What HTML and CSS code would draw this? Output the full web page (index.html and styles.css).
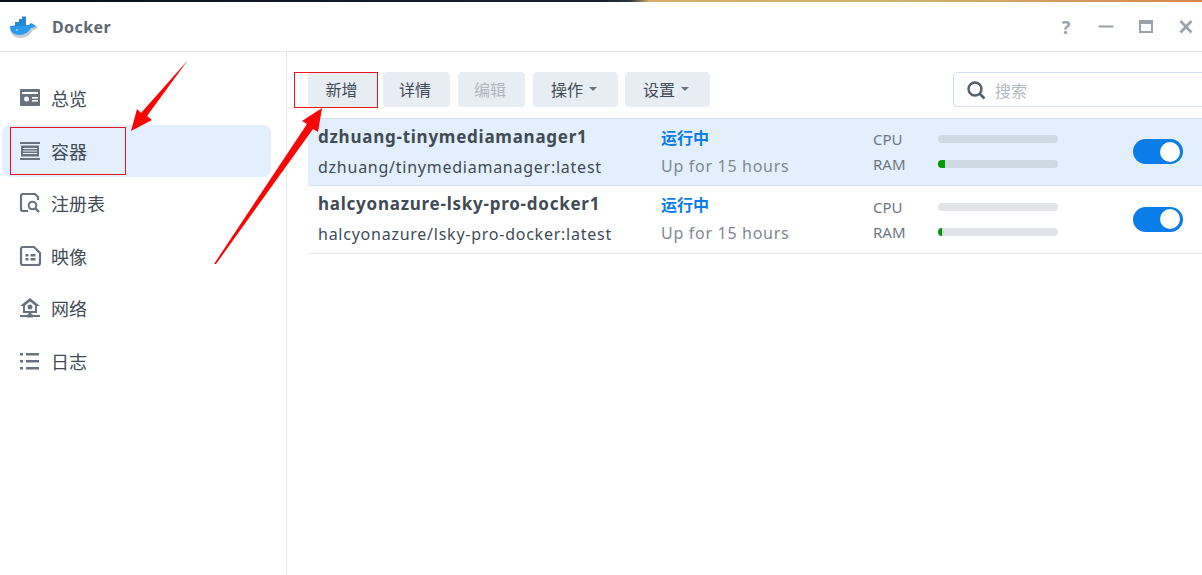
FILE: index.html
```html
<!DOCTYPE html>
<html lang="zh-CN">
<head>
  <meta charset="UTF-8">
  <title>Docker</title>
  <link rel="stylesheet" href="styles.css">
</head>
<body>
  <div class="top-strip"></div>

  <!-- Title bar -->
  <header class="titlebar">
    <svg class="logo" width="30" height="24" viewBox="0 0 30 24">
      <path d="M1 13c5-1 16-1 20-1 1-2 3-3 4-2l4 2c-1 2-3 3-5 3-3 5-7 8-12 8-7 0-11-4-11-10z" fill="#c3cbd0"/>
      <path d="M1 11c5-1 15-1 19-1 1-2 3-2 4-1l3 2c-1 1-3 2-5 2-2 4-7 7-11 7-6 0-10-3-10-9z" fill="#2a9bea"/>
      <path d="M6 7h11v4H6zM10 4h7v3h-7zM13 1.500h4V4h-4z" fill="#2489d4"/>
      <circle cx="8" cy="15" r="1" fill="#a8d6f5"/>
    </svg>
    <span class="app-name">Docker</span>
    <div class="win-buttons">
      <span class="help">?</span>
      <svg width="16" height="16" viewBox="0 0 16 16"><rect x="0.500" y="6.500" width="15" height="2" fill="#9aa1aa"/></svg>
      <svg width="16" height="16" viewBox="0 0 16 16"><path d="M1 1h14v13H1z M3 5v7h10V5z" fill="#9aa1aa" fill-rule="evenodd"/></svg>
      <svg width="16" height="16" viewBox="0 0 16 16"><path d="M2.500 2l11 11.500M13.500 2l-11 11.500" stroke="#9aa1aa" stroke-width="2.600" fill="none"/></svg>
    </div>
  </header>

  <div class="main">
    <!-- Sidebar -->
    <nav class="sidebar">
      <a class="nav-item">
        <svg width="24" height="24" viewBox="0 0 24 24"><path d="M3 3h18a1 1 0 0 1 1 1v15a1 1 0 0 1-1 1H3a1 1 0 0 1-1-1V4a1 1 0 0 1 1-1z" fill="#6a737d"/><rect x="4" y="6" width="16" height="2" fill="#fff"/><circle cx="8.500" cy="13" r="2.500" fill="#fff"/><rect x="14" y="11" width="6" height="1.600" fill="#fff"/><rect x="14" y="14" width="6" height="1.600" fill="#fff"/></svg>
        总览
      </a>
      <a class="nav-item active">
        <svg width="24" height="24" viewBox="0 0 24 24"><path d="M2 3h20v2H2zM2 19h20v2H2zM3 6.500h18v11H3zM5 9v1h14V9zM5 11.500v1h14v-1zM5 14v1h14v-1z" fill="#6a737d" fill-rule="evenodd"/></svg>
        容器
      </a>
      <a class="nav-item">
        <svg width="24" height="24" viewBox="0 0 24 24"><path d="M10 20H5a2 2 0 0 1-2-2V5a2 2 0 0 1 2-2h12l3 3v3" fill="none" stroke="#6a737d" stroke-width="2.200"/><circle cx="14.500" cy="14.500" r="3.800" fill="none" stroke="#6a737d" stroke-width="2"/><path d="M17.500 17.500l3.500 3.500" stroke="#6a737d" stroke-width="2.400"/></svg>
        注册表
      </a>
      <a class="nav-item">
        <svg width="24" height="24" viewBox="0 0 24 24"><path d="M5 3h11l6 6v10a2 2 0 0 1-2 2H5a2 2 0 0 1-2-2V5a2 2 0 0 1 2-2z" fill="none" stroke="#6a737d" stroke-width="2.200"/><path d="M7.500 10h3v2.500h-3zM12.500 10h5v2.500h-5zM7.500 14h3v2.500h-3zM12.500 14h5v2.500h-5z" fill="#6a737d"/></svg>
        映像
      </a>
      <a class="nav-item">
        <svg width="24" height="24" viewBox="0 0 24 24"><path d="M12 2L2 10h3v7h14v-7h3zM12 5.500l5 4V15H7V9.500z" fill="#6a737d" fill-rule="evenodd"/><circle cx="12" cy="11" r="2.500" fill="#6a737d"/><path d="M10.500 16h3v3h-3zM2 19h7v2H2zM15 19h7v2h-7zM9 18.500h6v3H9z" fill="#6a737d"/></svg>
        网络
      </a>
      <a class="nav-item">
        <svg width="24" height="24" viewBox="0 0 24 24"><path d="M2 4h3v2.400H2zM8 4h13v2.400H8zM2 11h3v2.400H2zM8 11h13v2.400H8zM2 18h3v2.400H2zM8 18h13v2.400H8z" fill="#6a737d"/></svg>
        日志
      </a>
    </nav>

    <!-- Container list -->
    <section class="content">
      <div class="toolbar">
        <button class="btn btn-new">新增</button>
        <button class="btn btn-detail">详情</button>
        <button class="btn btn-edit" disabled>编辑</button>
        <button class="btn btn-action">操作<i class="caret"></i></button>
        <button class="btn btn-settings">设置<i class="caret"></i></button>
        <div class="search">
          <svg width="20" height="20" viewBox="0 0 20 20"><circle cx="9" cy="9" r="6.500" fill="none" stroke="#56606c" stroke-width="2.400"/><path d="M13.500 13.500l5 5" stroke="#56606c" stroke-width="2.600"/></svg>
          <span>搜索</span>
        </div>
      </div>

      <div class="row selected">
        <div class="names">
          <div class="name">dzhuang-tinymediamanager1</div>
          <div class="image">dzhuang/tinymediamanager:latest</div>
        </div>
        <div class="status">
          <div class="state">运行中</div>
          <div class="uptime">Up for 15 hours</div>
        </div>
        <div class="usage">
          <div class="meter"><span>CPU</span><div class="bar"></div></div>
          <div class="meter"><span>RAM</span><div class="bar"><div class="fill" style="width:6%"></div></div></div>
        </div>
        <div class="toggle"></div>
      </div>

      <div class="row">
        <div class="names">
          <div class="name">halcyonazure-lsky-pro-docker1</div>
          <div class="image">halcyonazure/lsky-pro-docker:latest</div>
        </div>
        <div class="status">
          <div class="state">运行中</div>
          <div class="uptime">Up for 15 hours</div>
        </div>
        <div class="usage">
          <div class="meter"><span>CPU</span><div class="bar"></div></div>
          <div class="meter"><span>RAM</span><div class="bar"><div class="fill" style="width:3.500%"></div></div></div>
        </div>
        <div class="toggle"></div>
      </div>
    </section>
  </div>

  <!-- Red annotations drawn over the screenshot -->
  <svg class="marks" width="1202" height="575" viewBox="0 0 1202 575">
    <rect x="10.500" y="127.500" width="115" height="47" fill="none" stroke="#e8141c"/>
    <rect x="294.500" y="72.500" width="83" height="35" fill="none" stroke="#e8141c"/>
    <path d="M188 60L147 116 152 120 131 131 137 109 141 113z" fill="#fa0505"/>
    <path d="M214 264L307 124 302 121 322 108 318 132 313 129 216 264z" fill="#fa0505"/>
  </svg>
</body>
</html>
```

FILE: styles.css
```css
* {
  box-sizing: border-box;
}
body {
  margin: 0;
  width: 1202px;
  height: 575px;
  overflow: hidden;
  background: #fff;
  font-family: "Noto Sans", "Noto Sans CJK SC", sans-serif;
  font-size: 16px;
  color: #414b55;
}
.top-strip {
  height: 2px;
  background: linear-gradient(90deg, #0b0f1c 0, #1a2230 50%, #2a3640 52.500%, #d9ad6b 54%, #cdb36f 75%, #d9854f 100%);
}
.titlebar {
  height: 50px;
  display: flex;
  align-items: center;
  padding-left: 9px;
  border-bottom: 1px solid #e4e7eb;
}
.logo {
  margin-right: 13px;
}
.app-name {
  font-size: 16px;
  font-weight: 700;
  letter-spacing: 0.400px;
  color: #5f6873;
}
.win-buttons {
  margin-left: auto;
  display: flex;
  align-items: center;
  gap: 24px;
  padding-right: 8px;
}
.help {
  width: 14px;
  font-size: 18px;
  font-weight: 700;
  color: #9aa1aa;
  text-align: center;
  margin-right: 1px;
}
.main {
  display: flex;
  height: 523px;
}
.sidebar {
  width: 287px;
  flex: none;
  padding: 20px 15px 0 2px;
  border-right: 1px solid #e0e7f0;
}
.nav-item {
  display: flex;
  align-items: center;
  gap: 9px;
  height: 52.500px;
  padding-left: 16px;
  font-size: 18px;
  border-radius: 8px;
  color: #414b55;
}
.nav-item.active {
  background: #e3effc;
}
.content {
  flex: 1;
  min-width: 0;
  padding-left: 21px;
}
.toolbar {
  display: flex;
  height: 35px;
  margin-top: 20px;
  margin-bottom: 11px;
}
.btn {
  flex: none;
  height: 35px;
  border: none;
  border-radius: 4px;
  background: #e8ecf3;
  color: #414b55;
  font-family: inherit;
  font-size: 16px;
  padding: 0 3px 2px 0;
  display: flex;
  align-items: center;
  justify-content: center;
}
.btn-new {
  width: 70px;
  margin-right: 5px;
}
.btn-detail {
  width: 67px;
  margin-right: 8px;
}
.btn-edit {
  width: 67px;
  margin-right: 8px;
  color: #b1b7bf;
}
.btn-action {
  width: 85px;
  margin-right: 7px;
}
.btn-settings {
  width: 85px;
}
.caret {
  width: 0;
  height: 0;
  margin-left: 6px;
  border-left: 4px solid transparent;
  border-right: 4px solid transparent;
  border-top: 4px solid #6a737d;
}
.search {
  width: 260px;
  margin-left: 243px;
  flex: none;
  display: flex;
  align-items: center;
  gap: 9px;
  padding-left: 12px;
  border: 1px solid #d3dfec;
  border-radius: 4px;
  color: #b4b9c0;
}
.row {
  display: flex;
  align-items: center;
  height: 68px;
  border-bottom: 1px solid #e4e9f0;
  padding-left: 10px;
}
.row.selected {
  height: 67.500px;
  background: #e3effc;
  border-top: 1px solid #d8e2ee;
  border-bottom-color: #d8e2ee;
}
.names {
  width: 343px;
  flex: none;
}
.name {
  font-weight: 700;
  font-size: 17px;
  letter-spacing: 0.750px;
  line-height: 30px;
}
.image {
  font-size: 16px;
  letter-spacing: 0.750px;
  line-height: 30px;
}
.status {
  width: 212px;
  flex: none;
}
.state {
  color: #0a7de8;
  font-weight: 700;
  line-height: 28px;
}
.uptime {
  color: #808892;
  letter-spacing: 0.700px;
  line-height: 28px;
}
.usage {
  width: 185px;
  flex: none;
}
.meter {
  display: flex;
  align-items: center;
  height: 25px;
  font-size: 15px;
  color: #6e7680;
}
.meter span {
  width: 65px;
}
.bar {
  width: 120px;
  height: 8px;
  border-radius: 4px;
  background: #e2e4e8;
  overflow: hidden;
}
.selected .bar {
  background: #cfd9e4;
}
.fill {
  height: 100%;
  background: #009a00;
}
.toggle {
  position: relative;
  width: 50px;
  height: 25px;
  margin-left: 75px;
  border-radius: 13px;
  background: #0a7de8;
}
.toggle::after {
  content: "";
  position: absolute;
  right: 3px;
  top: 2.500px;
  width: 20px;
  height: 20px;
  border-radius: 50%;
  background: #fff;
}
.marks {
  position: absolute;
  left: 0;
  top: 0;
  pointer-events: none;
}
```
